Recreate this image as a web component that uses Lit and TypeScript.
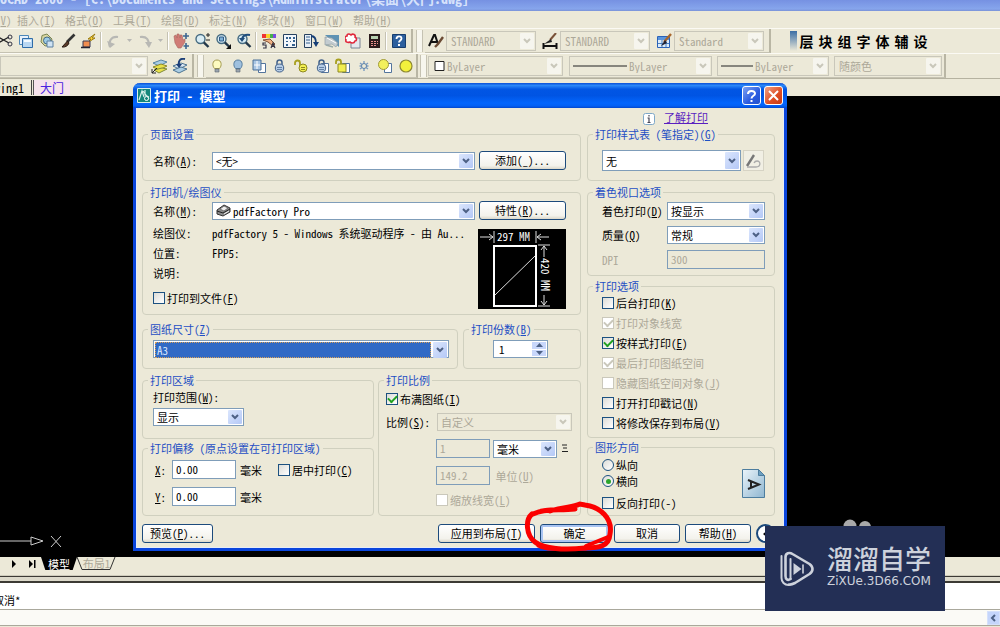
import { LitElement, html, css, svg, nothing, TemplateResult } from "lit";
import { customElement, property } from "lit/decorators.js";
import { classMap } from "lit/directives/class-map.js";

/* ---------- shared styles ---------- */

const base = css`
  * { box-sizing: border-box; }
  button, input, select {
    font: inherit;
    color: inherit;
    margin: 0;
    font-feature-settings: inherit;
  }
  svg { display: block; flex: none; }
`;

/* ---------- toolbar glyphs, all on a 16 x 16 grid ---------- */

const lens = svg`<circle cx="6.5" cy="6" r="4.5" fill="#d8ecf4" stroke="#456a80" stroke-width="1.4"/><path d="M9.8 9.3 14.5 14" stroke="#23384a" stroke-width="2.4"/>`;
const page = svg`<path d="M7.5 5.5h7v9h-7z" fill="#fff" stroke="#53749c"/>`;
const lock = (c: string, s: string) => svg`<path d="M5 7V4.500a2.500 2.500 0 0 1 5 0V7" fill="none" stroke="${s}" stroke-width="1.500"/><ellipse cx="7.500" cy="10" rx="4.200" ry="4" fill="${c}" stroke="${s}"/><path d="M5 9.500h5M5 11.500h5" stroke="${s}" stroke-width=".7"/>`;
const bulb = (c: string, s: string) => svg`<path d="M5.500 10.500C3 8 3 2 8 2s5 6 2.500 8.500z" fill="${c}" stroke="${s}"/><path d="M6 11h4v3H6z" fill="#9aa4ae" stroke="#5d6770" stroke-width=".6"/>`;

const glyphs: Record<string, TemplateResult> = {
  cut: svg`<path d="M1 4 12 10M1 10 12 4" stroke="#222" stroke-width="1.300"/><circle cx="13" cy="4" r="2" fill="none" stroke="#334"/><circle cx="13" cy="11" r="2" fill="none" stroke="#334"/>`,
  copy: svg`<path d="M1.500 2.500h9v9h-9z" fill="#e8f1fb" stroke="#4c86b8"/><path d="M4.500 5.500h10v9h-10z" fill="#b9d7f2" stroke="#2f6ca8"/><path d="M6 7h7v2H6z" fill="#f4faff"/>`,
  paste: svg`<path d="M3 2.500 8 1l5 5-2 6-5 1-4-4z" fill="#d9d6a0" stroke="#7c8654"/><circle cx="8" cy="7.500" r="3.500" fill="#9ccbe6" stroke="#436a86"/><path d="M8 8h6v6H8z" fill="#cfe3f4" stroke="#5a7ea0"/>`,
  brush: svg`<path d="M14.500 1.500 7 9" stroke="#333" stroke-width="2.600"/><path d="M7.500 8 2 14c3 .5 6-1 7-4z" fill="#5a3a28" stroke="#291a12"/>`,
  match: svg`<path d="M14 1 7 6h3L6 10l8-5h-3z" fill="#ffd83a" stroke="#9a7a10"/><path d="M2 8h7v6H2z" fill="#f08d50" stroke="#3b3b55"/><path d="M0 14.500h9" stroke="#223" stroke-width="1.500"/>`,
  undo: svg`<path d="M4 14C2 9 5 3 12 4" fill="none" stroke="#b8b8b4" stroke-width="2.200"/><path d="M1 8l3 7 5-4z" fill="#b8b8b4"/>`,
  redo: svg`<path d="M3 4c7-1 9 3 9 9" fill="none" stroke="#b8b8b4" stroke-width="2.200"/><path d="M8 9l4 6 3-6z" fill="#b8b8b4"/>`,
  pan: svg`<path d="M1 3l2-1 1 3V1h2l1 4V2h2l1 5 2-1v3l-4 6H5L2 10z" fill="#d07c76" stroke="#a8645e" stroke-width=".6"/><path d="M13 0v6M10 3h6M13 10v6M10.500 13H16" stroke="#3d6690" stroke-width="1.600"/>`,
  zoom: svg`${lens}<path d="M12 2h4M14 0v4M12 7h4" stroke="#222"/>`,
  zoomwin: svg`${lens}<path d="M4.500 4h4v4h-4z" fill="#7fb1d6" stroke="#335c88"/><path d="M16 11v5h-5z" fill="#111"/>`,
  zoomprev: svg`${lens}<path d="M14 2C9 1 7 3 6 6" fill="none" stroke="#1f4d7c" stroke-width="2.200"/><path d="M3 5h6L6 9z" fill="#1f4d7c"/>`,
  props: svg`<path d="M1 1h4v4H1z" fill="#e33"/><path d="M5 1h4v4H5z" fill="#f5d32a"/><path d="M9 1h3v4H9z" fill="#45b04b"/><path d="M12 1h3v4h-3z" fill="#7a4be0"/><path d="M2 7 9 6l5 5-2 2-5-4z" fill="#f0b183" stroke="#83543a"/><path d="M5 10H2v2h3v3H2M10 15l2-5 2 5M10.500 13.500h3" fill="none" stroke="#334" stroke-width="1.200"/>`,
  center: svg`<path d="M1.500 1.500h13v13h-13z" fill="#f3f7fb" stroke="#27415f"/><path d="M4 4h2v2H4zM7 4h2v2H7zM11 4h2v2h-2zM4 8h2v1H4zM8 8h1v1H8zM11 7h2v2h-2zM4 11h2v2H4zM10 11h3v2h-3z" fill="#34618f"/>`,
  tool: svg`<path d="M1.500 1.500h7v13h-7z" fill="#e8eff6" stroke="#27415f"/><path d="M3 4h4M3 7h4M3 10h4" stroke="#34618f"/><path d="M8 3c4 0 5 3 5 7" fill="none" stroke="#173f77" stroke-width="1.800"/><path d="M10 9h6l-3 5z" fill="#173f77"/>`,
  sheet: svg`<path d="M1 2h14v12L9 9z" fill="#5f93b4"/><path d="M1 4l7 1 6 5-2 4-4-3-7 1z" fill="#c3ccd0" stroke="#8796a0" stroke-width=".6"/><path d="M3 5l9 5" stroke="#fff"/><path d="M2 12l7 2" stroke="#9aa" stroke-width="1.500"/>`,
  markup: svg`<path d="M6 5h9v10H6z" fill="#e4e8ee" stroke="#7a8494"/><path d="M2 3c0-3 3-2 4-1 2-2 5 0 4 2 2 1 2 4 0 4-1 3-4 2-5 1-2 1-5 0-4-2-2-1-1-4 1-4z" fill="#fff" stroke="#e0283c" stroke-width="1.600"/>`,
  calc: svg`<path d="M3 1h11v14H3z" fill="#2b1c1c"/><path d="M5 3h7v3H5z" fill="#b8d0b0"/><path d="M5 8h2v1H5zM8 8h2v1H8zM11 8h1v1h-1zM5 10h2v1H5zM8 10h2v1H8zM11 10h1v1h-1zM5 12h2v1H5zM8 12h2v1H8z" fill="#e8908c"/>`,
  help: svg`<path d="M1.500 1.500h13v13h-13z" fill="#2c5f9e" stroke="#173d6e"/><path d="M5.500 6c0-3.500 5-3.500 5-.5 0 2-2.500 2-2.500 4" fill="none" stroke="#fff" stroke-width="1.800"/><path d="M7 11h2v2H7z" fill="#fff"/>`,
  textstyle: svg`<path d="M1 13 6 2h1l3 9M3.500 9h5" fill="none" stroke="#111" stroke-width="2"/><path d="M15 4 10 11l-3 3" stroke="#6b4a34" stroke-width="2.400"/>`,
  dimstyle: svg`<path d="M14 0 8 7" stroke="#7a5238" stroke-width="2"/><path d="M2 11 9 6l1 3z" fill="#222"/><path d="M1 13h14M1.500 10v6M14.500 10v6" stroke="#111" stroke-width="2"/>`,
  tablestyle: svg`<path d="M1.500 3.500h12v11h-12z" fill="#dcebfa" stroke="#2a62b8"/><path d="M2 4h11v3H2z" fill="#5a95dd"/><path d="M2 10.500h11M6 7v7M10 7v7" stroke="#4a80c0"/><path d="M15 1 8 9" stroke="#a8672c" stroke-width="2.400"/><path d="M9 7l-4 6 6-3z" fill="#223"/>`,
  layers: svg`<path d="M2 5 10 2l6 2-8 4z" fill="#a9cde4" stroke="#5684a4"/><path d="M2 9l8-3 6 2-8 4z" fill="#e8e04a" stroke="#8d8a28"/><path d="M3 12l8-2 5 1-8 4z" fill="#e8e04a" stroke="#7f8a3a"/><path d="M1 15l5-5M1 11v4h4" stroke="#222" fill="none"/>`,
  layerprev: svg`<path d="M1 8l8-3 6 2-8 4z" fill="#dceaf4" stroke="#4d7492"/><path d="M1 12l8-3 6 2-8 4z" fill="#a9cde4" stroke="#4d7492"/><path d="M13 1C8 0 6 3 7 8" fill="none" stroke="#1d3f78" stroke-width="2"/><path d="M4 6h6L7 10z" fill="#1d3f78"/>`,
  bulbOn: bulb("#fdfbc0", "#a39a50"),
  bulbOff: bulb("#9fc0de", "#557c9e"),
  frozenPage: svg`${page}<path d="M2 2h8v10H2z" fill="#a9c6e4" stroke="#4c7098"/><path d="M6 3v8M3 7h6" stroke="#fff"/>`,
  lockBlue: lock("#b5cce6", "#42618a"),
  lockYellow: svg`<path d="M2 7V5a2.500 2.500 0 0 1 5 0v3" fill="none" stroke="#a8a020" stroke-width="1.800"/><ellipse cx="10" cy="10" rx="4" ry="4" fill="#f2ee50" stroke="#8d8820"/><path d="M8 9.500h4M8 11.500h4" stroke="#8d8820"/>`,
  lockPage: svg`${page}${lock("#b5cce6", "#42618a")}`,
  unlockPage: svg`${page}<path d="M1 6V4a2.500 2.500 0 0 1 5 0v3" fill="none" stroke="#a8a020" stroke-width="1.800"/><path d="M3 6h8v8H3z" fill="#f2ee50" stroke="#8d8820"/>`,
  snow: svg`<path d="M8 3v10M4 5l8 6M12 5l-8 6M3.500 8h9" stroke="#7c9cc0" stroke-width="1.400"/><circle cx="8" cy="8" r="2.500" fill="#ece9d8" stroke="#5c83ac"/>`,
  sunPage: svg`${page}<circle cx="6.500" cy="6.500" r="5" fill="#f3f05c" stroke="#a09a38"/>`,
  sun: svg`<circle cx="8" cy="8" r="6" fill="#f3f03c" stroke="#8d8830" stroke-width="1.200"/>`,
};

@customElement("tool-button")
class ToolButton extends LitElement {
  static styles = [base, css`
    :host { display: block; flex: none; width: 21px; }
    button {
      display: flex; align-items: center; justify-content: center;
      width: 100%; height: 22px; padding: 0; border: 0; background: none;
    }
  `];
  @property() icon = "";
  render() {
    return html`<button type="button" aria-label=${this.icon}>
      <svg width="16" height="16" viewBox="0 0 16 16" fill="none">${glyphs[this.icon]}</svg>
    </button>`;
  }
}

/* Drop-down in the Luna look; mode: normal | flat | dim | picked */
@customElement("luna-combo")
class LunaCombo extends LitElement {
  static styles = [base, css`
    :host { display: block; min-width: 0; }
    .box {
      display: flex; align-items: stretch; height: 18px;
      background: #fff; border: 1px solid #7f9db9; position: relative;
    }
    .tall { height: 21px; }
    .lead { display: flex; align-items: center; padding-left: 3px; }
    .wrap { display: grid; flex: 1; min-width: 0; }
    select {
      grid-area: 1 / 1; appearance: none; border: 0; outline: 0; border-radius: 0;
      background: transparent; padding: 0 18px 0 3px; min-width: 0; width: 100%;
      line-height: 14px; height: 100%; opacity: 1;
    }
    .lead + .wrap select { padding-left: 2px; }
    .arrow {
      grid-area: 1 / 1; justify-self: end; pointer-events: none;
      display: flex; align-items: center; justify-content: center;
      width: 14px; margin: 1px; border-radius: 1px;
      background: linear-gradient(135deg, #dbe6fd, #b4c8f6);
      color: #4d6185;
    }
    .flat, .dim { background: #ece9d8; border-color: #c9c7ba; color: #aca899; }
    .flat { height: 20px; }
    .flat select { padding-left: 4px; }
    .flat .arrow, .dim .arrow { background: #f6f5ee; color: #c9c7ba; }
    .picked select {
      background: #316ac5; color: #dfe9ff; margin: 1px 0 1px 1px; width: calc(100% - 18px);
      height: auto; padding-left: 1px; border: 1px dotted #d8a058;
    }
  `];
  @property() value = "";
  @property() label = "";
  @property() mode = "normal";
  @property({ attribute: false }) lead?: TemplateResult;
  render() {
    const off = this.mode === "dim" || this.mode === "flat";
    return html`<div class=${classMap({ box: true, [this.mode]: true })}>
      ${this.lead ? html`<span class="lead">${this.lead}</span>` : nothing}
      <div class="wrap">
        <select aria-label=${this.label} ?disabled=${off}><option>${this.value}</option></select>
        <span class="arrow"><svg width="8" height="6" viewBox="0 0 8 6"><path d="M1 1l3 3 3-3" fill="none" stroke="currentColor" stroke-width="2"/></svg></span>
      </div>
    </div>`;
  }
}

const key = (c: string) => html`(<u>${c}</u>)`;

@customElement("print-dialog")
class PrintDialog extends LitElement {
  static styles = [base, css`
    :host {
      display: block; color: #000; background: #ece9d8;
      border: 3px solid #0a45dc; border-top: 0; border-radius: 7px 7px 0 0;
      box-shadow: inset 0 0 0 1px #e6ecf6;
    }
    .title {
      display: flex; align-items: center; height: 25px; gap: 3px; margin: 0 -3px;
      padding: 0 4px; border-radius: 7px 7px 0 0; color: #fff;
      font-size: 13px; font-weight: 700;
      background: linear-gradient(#0a4fd6, #2a86f8 10%, #0256e4 25%, #0054e3 50%, #0366fd 80%, #0360f4 92%, #0347cc);
    }
    .title h1 { font: inherit; margin: 0; flex: 1; }
    .tbtn {
      display: flex; align-items: center; justify-content: center; width: 19px; height: 19px;
      padding: 0; border: 1px solid #fff; border-radius: 3px;
      background: linear-gradient(135deg, #7ea2f2, #2a5be0 60%, #2352cc);
    }
    .close { background: linear-gradient(135deg, #f0a084, #dd4c22 60%, #c83a14); }
    .body { padding: 2px 9px 5px 6px; }
    .learn { display: flex; align-items: center; justify-content: flex-end; gap: 9px; height: 14px; margin: 0 67px 4px 0; }
    .learn svg { margin-top: 4px; }
    .learn a { color: #5a1fc0; }
    .cols { display: grid; grid-template-columns: 439fr 188fr; gap: 6px; }
    .col { display: flex; flex-direction: column; min-width: 0; }
    fieldset {
      margin: 0; min-width: 0; border: 1px solid #d0d0bf; border-radius: 4px;
      padding: 0 14px 0 10px;
    }
    legend { color: #1f4fc4; line-height: 12px; height: 12px; padding: 0 2px; margin-left: -5px; white-space: nowrap; }
    label, .label { white-space: nowrap; line-height: 12px; }
    .row { display: flex; align-items: center; min-width: 0; }
    .start { align-items: flex-start; }
    .grow { flex: 1; min-width: 0; }
    .name { width: 59px; flex: none; }
    .push {
      height: 19px; padding: 0; border: 1px solid #1c4a7c; border-radius: 3px; white-space: nowrap;
      background: linear-gradient(#fff, #f3f2ec 80%, #dcd8ca); line-height: 15px; flex: none;
    }
    .w87 { width: 87px; margin-left: 4px; }
    .ok { box-shadow: inset 0 0 0 2px #a9c4f2; }
    .text {
      height: 19px; border: 1px solid #7f9db9; background: #fff; padding: 0 3px 1px;
      border-radius: 0; min-width: 0; line-height: 14px;
    }
    .text:disabled { background: #ece9d8; color: #aca899; }
    input[type="checkbox"], input[type="radio"] {
      appearance: none; width: 12px; height: 12px; flex: none; margin: 0 2px 0 0;
      border: 1px solid #1c5180; background: linear-gradient(135deg, #dcdcd7, #fff);
      display: grid; place-items: center;
    }
    input[type="radio"] { border-radius: 50%; }
    input[type="checkbox"]:checked::before {
      content: ""; width: 7px; height: 4px; border: solid #21a121; border-width: 0 0 2px 2px;
      transform: translateY(-1px) rotate(-45deg);
    }
    input[type="radio"]:checked::before { content: ""; width: 5px; height: 5px; border-radius: 50%; background: #2ba52b; }
    input:disabled[type="checkbox"] { border-color: #cac8bb; background: #fff; }
    input:disabled[type="checkbox"]:checked::before { border-color: #cac8bb; }
    .check { display: flex; align-items: center; }
    .off { color: #aca899; }

    .setup { padding-top: 11px; padding-bottom: 10px; }
    .printer { margin-top: 5px; padding-top: 3px; padding-bottom: 5px; }
    .facts { padding-top: 3px; }
    .facts .row { height: 20px; }
    .facts .check { margin-top: 8px; height: 14px; }
    .sheet { margin: 9px 0 0 4px; }
    .pair { display: grid; grid-template-columns: 316fr 118fr; gap: 5px; margin-top: 8px; }
    .paper, .copies { padding-top: 5px; padding-bottom: 10px; }
    .paper { padding-right: 8px; }
    .copies { padding-left: 29px; }
    .copies legend { margin-left: -24px; }
    .spin { display: grid; grid-template-columns: 1fr 14px; width: 55px; height: 18px; border: 1px solid #7f9db9; background: #fff; padding: 1px; }
    .spin input { border: 0; padding: 0 4px; width: 100%; min-width: 0; line-height: 14px; background: none; }
    .steps { display: grid; grid-template-rows: 1fr 1fr; gap: 1px; }
    .steps button { border: 0; padding: 0; background: #c8d7fb; display: grid; place-items: center; }
    .lower { display: grid; grid-template-columns: 232fr 203fr; gap: 4px; margin-top: 5px; }
    .area { padding-top: 5px; padding-bottom: 12px; }
    .area luna-combo { width: 91px; margin-top: 5px; }
    .offset { margin-top: 3px; padding-top: 6px; padding-bottom: 9px; }
    .offset .row + .row { margin-top: 8px; }
    .axis { width: 19px; padding-left: 2px; flex: none; }
    .num { width: 64px; }
    .unit { padding-left: 4px; width: 42px; flex: none; }
    .scale { display: grid; gap: 8px; padding: 7px 8px 8px 7px; align-content: start; grid-template-columns: minmax(0, 1fr); }
    .scale legend { margin-left: -2px; }
    .scale .check { height: 12px; }
    .scale .name { width: 51px; }
    .factor { width: 54px; }
    .inset { padding-left: 50px; }
    .mm { width: 64px; margin: 0 4px 0 3px; }
    .scale .inset.check { height: 13px; }

    .right legend { margin-left: -9px; }
    .style { padding: 10px 10px 9px 14px; }
    .pen { width: 21px; height: 21px; margin-left: 2px; padding: 0; border: 1px solid #d6d3c4; background: #f1efe4; display: grid; place-items: center; }
    .shade { margin-top: 5px; padding: 4px 9px 6px 14px; display: grid; gap: 6px; grid-template-columns: minmax(0, 1fr); }
    .shade .name { width: 65px; }
    .options { margin-top: 4px; padding: 1px 4px 4px 14px; }
    .options .check { height: 20px; }
    .orient { margin-top: 3px; padding: 4px 9px 5px 14px; }
    .orient .radio { height: 16px; }
    .orient .check.last { margin-top: 6px; height: 15px; }
    .actions { display: flex; margin-top: 8px; gap: 5px; align-items: center; }
    .spacer { flex: 1; }
    .more { width: 19px; height: 19px; border-radius: 50%; border: 2px solid #1c4a7c; background: #fff; padding: 0; display: grid; place-items: center; }
    .w71 { width: 71px; }
    .w97 { width: 97px; }
    .w69 { width: 69px; }
    .w66 { width: 66px; }
  `];

  private check(text: unknown, checked = false, disabled = false, extra = "") {
    return html`<label class="check ${extra} ${disabled ? "off" : ""}">
      <input type="checkbox" .checked=${checked} ?disabled=${disabled} /><span>${text}</span></label>`;
  }

  render() {
    const printer = html`<svg width="15" height="13" viewBox="0 0 15 13"><path d="M1 6 8 1l6 3v4l-7 4-6-2z" fill="#8c8c8c" stroke="#333"/><path d="M4 5l4-3 4 2-4 3z" fill="#eee" stroke="#555" stroke-width=".7"/><path d="M1 7l6 2 7-4" stroke="#222" fill="none"/><path d="M8 10l5-3" stroke="#eee"/></svg>`;
    return html`
      <header class="title">
        <svg width="14" height="15" viewBox="0 0 14 15"><path d="M.5.5h13v14H.5z" fill="#15877c" stroke="#d8f0ea"/><path d="M2 12 5 3l2 6M8 2v5l4 2M6 3l6 8" fill="none" stroke="#d8f0ea" stroke-width="1.200"/><circle cx="9.500" cy="10.500" r="2" fill="#15877c" stroke="#fff"/></svg>
        <h1>打印 - 模型</h1>
        <button class="tbtn" type="button" aria-label="帮助"><svg width="13" height="14" viewBox="0 0 13 14"><path d="M3 5c0-4 7-4 7-.5C10 7 6.500 6.500 6.500 9.500" fill="none" stroke="#fff" stroke-width="2"/><path d="M5.500 11h2v2h-2z" fill="#fff"/></svg></button>
        <button class="tbtn close" type="button" aria-label="关闭"><svg width="13" height="13" viewBox="0 0 13 13"><path d="M2 2l9 9M11 2l-9 9" stroke="#fff" stroke-width="2"/></svg></button>
      </header>
      <div class="body">
        <div class="learn">
          <svg width="12" height="12" viewBox="0 0 12 12"><rect x=".5" y=".5" width="11" height="11" rx="2" fill="#fff" stroke="#7fa8c8"/><path d="M6 2v1.500M4.500 5H6v4M4.500 9.500h3" stroke="#445" fill="none" stroke-width="1.200"/></svg>
          <a href="#learn">了解打印</a>
        </div>
        <div class="cols">
          <div class="col">
            <fieldset class="setup"><legend>页面设置</legend>
              <div class="row"><span class="label name">名称${key("A")}:</span>
                <luna-combo class="grow" label="页面设置名称" value="<无>"></luna-combo>
                <button type="button" class="push w87">添加(_)...</button></div>
            </fieldset>
            <fieldset class="printer"><legend>打印机/绘图仪</legend>
              <div class="row"><span class="label name">名称${key("M")}:</span>
                <luna-combo class="grow" label="打印机名称" value="pdfFactory Pro" .lead=${printer}></luna-combo>
                <button type="button" class="push w87">特性${key("R")}...</button></div>
              <div class="row start">
                <div class="facts grow">
                  <div class="row"><span class="label name">绘图仪:</span><span class="label">pdfFactory 5 - Windows 系统驱动程序 - 由 Au...</span></div>
                  <div class="row"><span class="label name">位置:</span><span class="label">FPP5:</span></div>
                  <div class="row"><span class="label name">说明:</span></div>
                  ${this.check(html`打印到文件${key("F")}`)}
                </div>
                <svg class="sheet" width="88" height="80" viewBox="0 0 88 80" font-size="11" fill="#fff">
                  <path d="M0 0h88v80H0z" fill="#000"/>
                  <path d="M16 17h42v60H16z" fill="none" stroke="#fff" stroke-width="2"/>
                  <path d="M17 66 57 27M2 8h13M11 5l4 3-4 3M16 2v12M58 2v12M71 8H59M63 5l-4 3 4 3M60 16h12M66 28V17M63 21l3-4 3 4M60 77h12M66 66v10M63 72l3 4 3-4" fill="none" stroke="#ddd"/>
                  <text x="19" y="12">297 MM</text>
                  <text x="0" y="0" transform="translate(63 29) rotate(90)">420 MM</text>
                </svg>
              </div>
            </fieldset>
            <div class="pair">
              <fieldset class="paper"><legend>图纸尺寸${key("Z")}</legend>
                <luna-combo label="图纸尺寸" value="A3" mode="picked"></luna-combo></fieldset>
              <fieldset class="copies"><legend>打印份数${key("B")}</legend>
                <div class="spin"><input aria-label="打印份数" value="1" />
                  <span class="steps">
                    <button type="button" aria-label="增加"><svg width="7" height="4" viewBox="0 0 7 4"><path d="M0 4 3.500 0 7 4z" fill="#4d6185"/></svg></button>
                    <button type="button" aria-label="减少"><svg width="7" height="4" viewBox="0 0 7 4"><path d="M0 0 3.500 4 7 0z" fill="#4d6185"/></svg></button>
                  </span></div></fieldset>
            </div>
            <div class="lower">
              <div class="col">
                <fieldset class="area"><legend>打印区域</legend>
                  <div class="label">打印范围${key("W")}:</div>
                  <luna-combo label="打印范围" value="显示"></luna-combo></fieldset>
                <fieldset class="offset"><legend>打印偏移 (原点设置在可打印区域)</legend>
                  <div class="row"><label class="axis" for="ox"><u>X</u>:</label><input id="ox" class="text num" value="0.00" /><span class="label unit">毫米</span>${this.check(html`居中打印${key("C")}`)}</div>
                  <div class="row"><label class="axis" for="oy"><u>Y</u>:</label><input id="oy" class="text num" value="0.00" /><span class="label unit">毫米</span></div>
                </fieldset>
              </div>
              <fieldset class="scale"><legend>打印比例</legend>
                ${this.check(html`布满图纸${key("I")}`, true)}
                <div class="row"><span class="label name">比例${key("S")}:</span><luna-combo class="grow" label="比例" value="自定义" mode="dim"></luna-combo></div>
                <div class="row inset"><input class="text factor" aria-label="毫米数" value="1" disabled /><luna-combo class="mm" label="长度单位" value="毫米"></luna-combo><svg width="8" height="9" viewBox="0 0 8 9"><path d="M1 1h5M2 4h4M1 7.500h6" stroke="#222" fill="none"/></svg></div>
                <div class="row inset"><input id="units" class="text factor" value="149.2" disabled /><label class="off" for="units">&nbsp;单位${key("U")}</label></div>
                ${this.check(html`缩放线宽${key("L")}`, false, true, "inset")}
              </fieldset>
            </div>
          </div>
          <div class="col right">
            <fieldset class="style"><legend>打印样式表 (笔指定)${key("G")}</legend>
              <div class="row"><luna-combo class="grow" label="打印样式表" value="无" mode="tall"></luna-combo>
                <button type="button" class="pen" aria-label="编辑"><svg width="17" height="15" viewBox="0 0 17 15"><path d="M2 13 9 2" stroke="#777" stroke-width="2.400"/><path d="M2 14h9c5 0 5-6 1-6-2 0-3 2-3 2" fill="none" stroke="#aaa" stroke-width="1.300"/></svg></button></div>
            </fieldset>
            <fieldset class="shade"><legend>着色视口选项</legend>
              <div class="row"><span class="label name">着色打印${key("D")}</span><luna-combo class="grow" label="着色打印" value="按显示"></luna-combo></div>
              <div class="row"><span class="label name">质量${key("Q")}</span><luna-combo class="grow" label="质量" value="常规"></luna-combo></div>
              <div class="row"><label class="name off" for="dpi">DPI</label><input id="dpi" class="text grow" value="300" disabled /></div>
            </fieldset>
            <fieldset class="options"><legend>打印选项</legend>
              ${this.check(html`后台打印${key("K")}`)}
              ${this.check("打印对象线宽", true, true)}
              ${this.check(html`按样式打印${key("E")}`, true)}
              ${this.check("最后打印图纸空间", true, true)}
              ${this.check(html`隐藏图纸空间对象${key("J")}`, false, true)}
              ${this.check(html`打开打印戳记${key("N")}`)}
              ${this.check(html`将修改保存到布局${key("V")}`)}
            </fieldset>
            <fieldset class="orient"><legend>图形方向</legend>
              <div class="row">
                <div class="grow">
                  <label class="check radio"><input type="radio" name="dir" /><span>纵向</span></label>
                  <label class="check radio"><input type="radio" name="dir" checked /><span>横向</span></label>
                  ${this.check(html`反向打印(-)`, false, false, "last")}
                </div>
                <svg width="23" height="29" viewBox="0 0 23 29"><defs><linearGradient id="pg" x1="0" y1="0" x2="1" y2="1"><stop offset="0" stop-color="#eaf4fa"/><stop offset="1" stop-color="#8fb6d0"/></linearGradient></defs><path d="M.5.5h16l6 6v22H.5z" fill="url(#pg)" stroke="#4d7d9e"/><path d="M16.500.5v6h6z" fill="#6c9fc0" stroke="#4d7d9e"/><path d="M6 11l11 4.500L6 20M9 12v7" fill="none" stroke="#222" stroke-width="2"/></svg>
              </div>
            </fieldset>
          </div>
        </div>
        <div class="actions">
          <button type="button" class="push w71">预览${key("P")}...</button>
          <span class="spacer"></span>
          <button type="button" class="push w97">应用到布局${key("T")}</button>
          <button type="button" class="push ok w69">确定</button>
          <button type="button" class="push w66">取消</button>
          <button type="button" class="push w66">帮助${key("H")}</button>
          <button type="button" class="more" aria-label="收起"><svg width="8" height="10" viewBox="0 0 8 10"><path d="M7 0v10L1 5z" fill="#000"/></svg></button>
        </div>
      </div>`;
  }
}

@customElement("app-root")
class AppRoot extends LitElement {
  static styles = [base, css`
    :host {
      display: flex; flex-direction: column; height: 100vh; overflow: hidden; position: relative;
      font-family: "Noto Sans CJK SC", "Liberation Mono", sans-serif; font-size: 11px; line-height: 14px;
      font-feature-settings: "hwid"; background: #ece9d8;
    }
    .caption {
      height: 11px; display: flex; align-items: flex-end; flex: none; overflow: hidden;
      background: linear-gradient(#7691e2, #86a5ec 80%, #7b93d8); color: #d6e2fb;
      font-size: 14px; font-weight: 700; line-height: 18px; white-space: pre; padding-bottom: 4px;
    }
    .menu { display: flex; height: 17px; flex: none; align-items: center; color: #aca899; padding-left: 17px; }
    .menu .cut { margin-left: -22px; width: 22px; }
    .menu a { color: inherit; text-decoration: none; width: 48px; white-space: nowrap; }
    .bar { display: flex; align-items: center; height: 25px; flex: none; border-top: 1px solid #fbfaf4; }
    .tray { display: flex; align-items: center; height: 24px; border-right: 2px solid #b9b6a4; border-bottom: 1px solid #c5c2b2; padding-right: 2px; flex: none; }
    .sep { width: 2px; height: 18px; border-left: 1px solid #c5c2b2; border-right: 1px solid #fff; margin: 0 1px; flex: none; }
    .grip { width: 7px; height: 22px; margin: 0 2px 0 3px; border: solid #c5c2b2; border-width: 0 1px; background: #f7f6ee; flex: none; }
    .tight { padding-right: 0; }
    .tight + .grip { margin: 0 1px 0 2px; }
    .first { margin-left: -6px; }
    .drop { width: 10px; display: grid; place-items: center; }
    .gap { width: 1px; flex: none; }
    .w89 { width: 90px; margin-right: 3px; }
    .layer { width: 148px; margin: 0; }
    .color { width: 135px; margin-right: 6px; }
    .ltype { width: 143px; margin-right: 5px; }
    .lweight { width: 112px; margin-right: 5px; }
    .plot { width: 108px; }
    .plugin { display: flex; align-items: center; margin-left: 19px; }
    .plugin i { width: 7px; height: 20px; background: linear-gradient(#3b6ea5, #ece9d8); }
    .plugin button { border: 0; background: none; padding: 0; width: 19px; font-size: 14px; font-weight: 700; }
    .tabs { display: flex; height: 18px; flex: none; padding-top: 1px; border-top: 1px solid #b5b2a0; font-size: 12px; align-items: flex-start; overflow: hidden; }
    .tabs button { border: 0; padding: 0; height: 15px; line-height: 14px; white-space: nowrap; }
    .tabs .one { width: 32px; border-right: 1px solid #444; background: #ece9d8; direction: rtl; padding-right: 7px; overflow: hidden; }
    .tabs .two { width: 37px; background: #f6e3ec; color: #4a22e0; border-left: 1px solid #555; margin-left: 1px; }
    .canvas { flex: 1; background: #000; position: relative; min-height: 0; }
    .ucs { position: absolute; left: 0; bottom: 8px; }
    .dots { position: absolute; left: 841px; bottom: 30px; }
    .layouts { display: flex; height: 19px; flex: none; align-items: flex-start; border-bottom: 1px solid #cfccbc; padding-left: 5px; }
    .layouts button { border: 0; background: none; padding: 0; height: 13px; line-height: 12px; }
    .nav { width: 18px; display: grid; place-items: center; }
    .model { width: 36px; color: #fff; background: #000 !important; clip-path: polygon(0 0, 100% 0, 88% 100%, 12% 100%); }
    .page { display: grid; width: 39px; color: #aca899; }
    .page svg, .page span { grid-area: 1 / 1; }
    .split { height: 7px; flex: none; border: solid #3c3a34; border-width: 1px 0 2px; background: #dcd9ca; }
    .cmd { height: 27px; flex: none; background: #fff; border-bottom: 1px solid #aaa89c; padding-top: 10px; overflow: hidden; }
    .cmd output { display: block; margin-left: -7px; }
    .scroll { height: 16px; flex: none; background: #fbfaf6; border-bottom: 1px solid #aaa89c; display: flex; justify-content: flex-end; }
    .scroll button { width: 13px; height: 14px; padding: 0; border: 1px solid #d5e0fb; background: #c5d5fb; display: grid; place-items: center; margin-top: 1px; }
    .foot { height: 1px; flex: none; }
    print-dialog { position: absolute; left: 133px; top: 83px; width: 654px; }
    .ring { position: absolute; left: 520px; top: 498px; pointer-events: none; }
    .brand {
      position: absolute; left: 765px; top: 526px; width: 180px; height: 85px; background: #232f55;
      display: flex; align-items: center; gap: 12px; padding: 0 0 0 15px; color: #cdd2dc;
    }
    .brand div { display: flex; flex-direction: column; gap: 4px; padding-bottom: 5px; }
    .brand strong { font-size: 26px; line-height: 26px; font-weight: 500; }
    .brand span { font-family: "DejaVu Sans", sans-serif; font-size: 12px; line-height: 12px; }
  `];

  private tools(names: string[]) {
    return names.map((n) => html`<tool-button icon=${n}></tool-button>`);
  }

  render() {
    const drop = html`<span class="drop"><svg width="5" height="3" viewBox="0 0 5 3"><path d="M0 0h5L2.500 3z" fill="#b8b8b4"/></svg></span>`;
    const line = (w: number) => html`<svg width=${w} height="2" viewBox="0 0 ${w} 2"><path d="M0 1h${w}" stroke="#222"/></svg>`;
    const swatch = html`<svg width="13" height="10" viewBox="0 0 13 10"><path d="M3 .5h9v9H3z" fill="#fff" stroke="#222"/></svg>`;
    const menus: [string, string][] = [["插入", "I"], ["格式", "O"], ["工具", "T"], ["绘图", "D"], ["标注", "N"], ["修改", "M"], ["窗口", "W"], ["帮助", "H"]];
    return html`
      <header class="caption">oCAD 2006 - [C:\\Documents and Settings\\Administrator\\桌面\\大门.dwg]</header>
      <nav class="menu"><a class="cut" href="#v">${key("V")}</a>${menus.map(([t, k]) => html`<a href="#${k}">${t}${key(k)}</a>`)}</nav>
      <div class="bar">
        <div class="tray">
          <tool-button class="first" icon="cut"></tool-button>${this.tools(["copy", "paste", "brush", "match"])}
          <span class="sep"></span>
          ${this.tools(["undo"])}${drop}${this.tools(["redo"])}${drop}<span class="gap"></span>
          <span class="sep"></span>
          ${this.tools(["pan", "zoom", "zoomwin", "zoomprev"])}
          <span class="sep"></span>
          ${this.tools(["props", "center", "tool", "sheet", "markup", "calc"])}
          <span class="sep"></span>
          ${this.tools(["help"])}
        </div>
        <span class="grip"></span>
        <div class="tray">
          ${this.tools(["textstyle"])}<luna-combo class="w89" mode="flat" label="文字样式" value="STANDARD"></luna-combo>
          ${this.tools(["dimstyle"])}<luna-combo class="w89" mode="flat" label="标注样式" value="STANDARD"></luna-combo>
          ${this.tools(["tablestyle"])}<luna-combo class="w89" mode="flat" label="表格样式" value="Standard"></luna-combo>
        </div>
        <div class="plugin"><i></i>${[..."层块组字体辅设"].map((c) => html`<button type="button">${c}</button>`)}</div>
      </div>
      <div class="bar">
        <div class="tray">
          <luna-combo class="layer" mode="flat" label="图层" value=""></luna-combo>
          ${this.tools(["layers", "layerprev"])}
        </div>
        <span class="grip"></span>
        <div class="tray tight">
          ${this.tools(["bulbOn", "bulbOff", "frozenPage", "lockBlue", "lockYellow", "lockPage", "unlockPage", "snow", "sunPage", "sun"])}
        </div>
        <span class="grip"></span>
        <div class="tray">
          <luna-combo class="color" mode="flat" label="颜色" value="ByLayer" .lead=${swatch}></luna-combo>
          <luna-combo class="ltype" mode="flat" label="线型" value="ByLayer" .lead=${line(54)}></luna-combo>
          <luna-combo class="lweight" mode="flat" label="线宽" value="ByLayer" .lead=${line(32)}></luna-combo>
          <luna-combo class="plot" mode="flat" label="打印样式" value="随颜色"></luna-combo>
        </div>
      </div>
      <div class="tabs"><button type="button" class="one">Drawing1</button><button type="button" class="two">大门</button></div>
      <main class="canvas">
        <svg class="ucs" width="64" height="16" viewBox="0 0 64 16"><path d="M0 8h31M31 4l12 4-12 4zM51 3l10 11M61 3 51 14" fill="none" stroke="#ccc"/></svg>
        <svg class="dots" width="32" height="8" viewBox="0 0 32 8"><circle cx="9" cy="7" r="6.500" fill="#a9a9a9"/><circle cx="24" cy="8" r="6" fill="#a9a9a9"/></svg>
      </main>
      <div class="layouts">
        <button type="button" class="nav" aria-label="下一个"><svg width="6" height="8" viewBox="0 0 6 8"><path d="M1 0l4 4-4 4z"/></svg></button>
        <button type="button" class="nav" aria-label="最后"><svg width="8" height="8" viewBox="0 0 8 8"><path d="M1 0l4 4-4 4zM6 0h1.500v8H6z"/></svg></button>
        <button type="button" class="model">模型</button>
        <button type="button" class="page"><svg width="39" height="13" viewBox="0 0 39 13"><path d="M0 0 5 12.500h28L38 0" fill="none" stroke="#333"/></svg><span>布局1</span></button>
      </div>
      <div class="split"></div>
      <div class="cmd"><output>取消*</output></div>
      <div class="scroll"><button type="button" aria-label="向左"><svg width="7" height="8" viewBox="0 0 7 8"><path d="M5 1 2 4l3 3" fill="none" stroke="#4d6185" stroke-width="2"/></svg></button></div>
      <div class="foot"></div>
      <print-dialog></print-dialog>
      <svg class="ring" width="100" height="60" viewBox="0 0 100 60" fill="none" stroke="#fb0000" stroke-width="5" stroke-linecap="round">
        <path d="M13 16C26 10 38 13 55 11M30 13C45 8 52 10 60 6l5 1C80 9 93 20 90 36 89 48 80 50 65 50 45 52 24 51 15 44 6 37 5 22 12 16"/>
        <path d="M88 39 66 48" stroke-width="4"/><path d="M18 48c10 6 22 1 48 3" stroke-width="3"/>
      </svg>
      <aside class="brand">
        <svg width="35" height="36" viewBox="0 0 35 36" fill="none" stroke="#cdd2dc" stroke-linecap="round" stroke-linejoin="round"><path d="M1.500 5v22c0 4 3 7 7 7" stroke-width="2"/><path d="M10.500 28c-3 2-5 0-5-3V6c0-4 4-5 7-3l17 10c4 3 4 7 0 10L15 32c-2 1-4 2-6 1.500" stroke-width="2.600"/><path d="M10.500 8v20" stroke-width="2"/><path d="M13.500 12v12l8-6z" fill="#cdd2dc" stroke="none"/><path d="M23 14v8" stroke-width="1.600"/></svg>
        <div><strong>溜溜自学</strong><span>ZiXUe.3D66.COM</span></div>
      </aside>`;
  }
}
